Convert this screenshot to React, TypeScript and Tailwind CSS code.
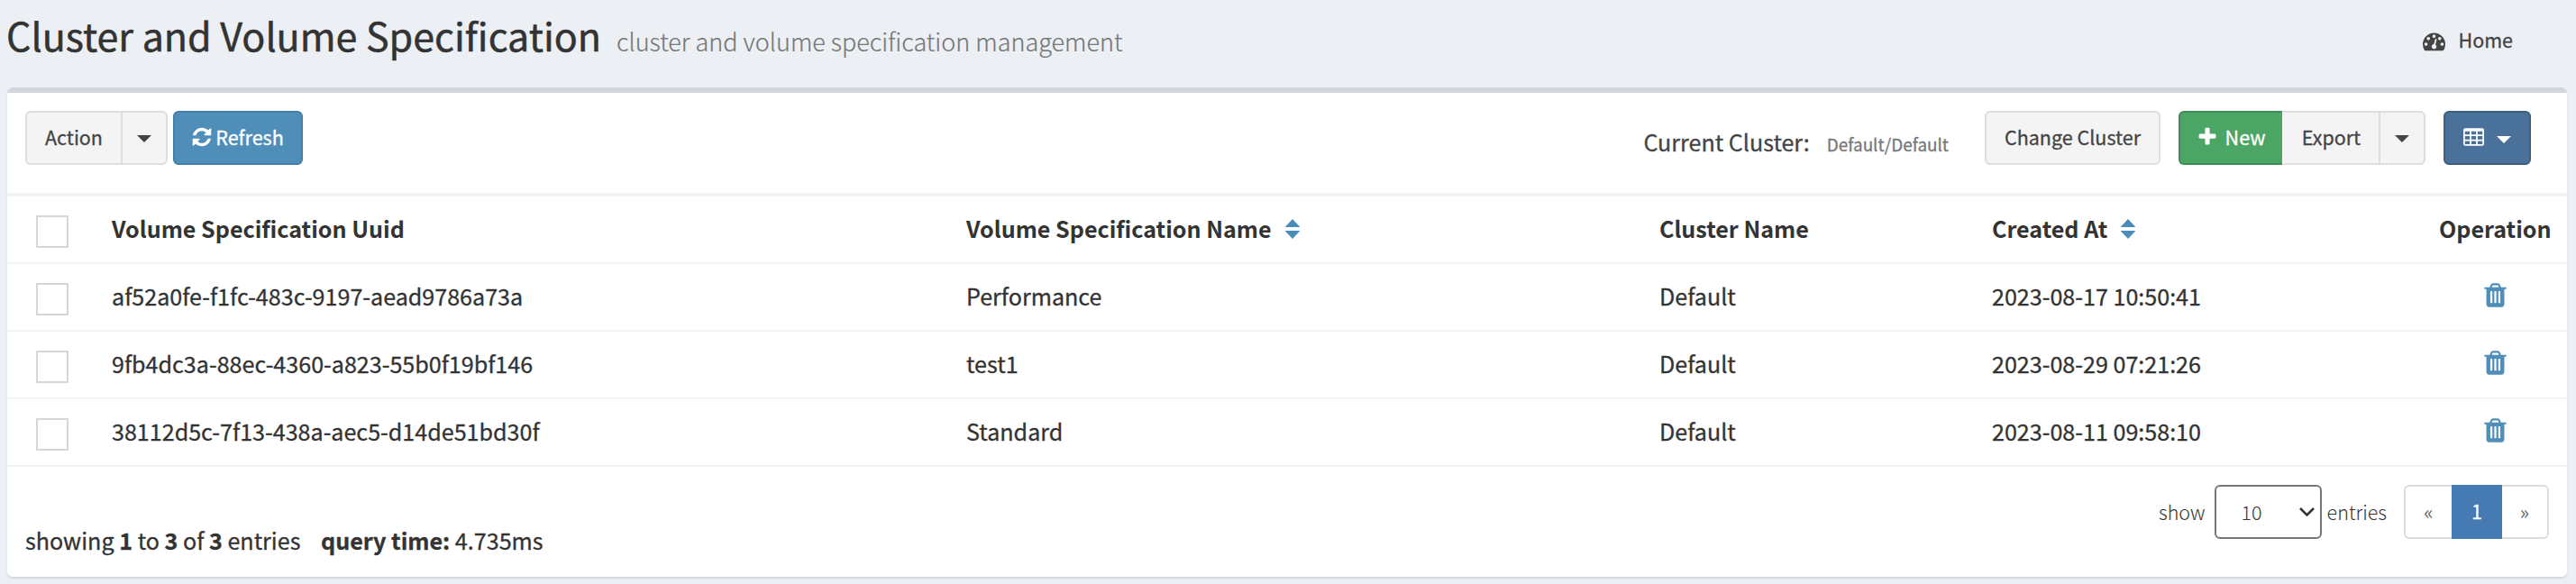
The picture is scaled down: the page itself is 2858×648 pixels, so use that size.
import type { ReactNode } from "react";

type Row = { uuid: string; name: string; cluster: string; created: string };

const rows: Row[] = [
  { uuid: "af52a0fe-f1fc-483c-9197-aead9786a73a", name: "Performance", cluster: "Default", created: "2023-08-17 10:50:41" },
  { uuid: "9fb4dc3a-88ec-4360-a823-55b0f19bf146", name: "test1", cluster: "Default", created: "2023-08-29 07:21:26" },
  { uuid: "38112d5c-7f13-438a-aec5-d14de51bd30f", name: "Standard", cluster: "Default", created: "2023-08-11 09:58:10" },
];

const columns = "grid grid-cols-[116px_948px_769px_369px_496px_124px] h-[75px] border-b-2 border-[#f4f4f4]";
const grayButton = "flex items-center justify-center h-[60px] pb-[3px] border-2 border-[#ddd] bg-[#f4f4f4] text-[#444]";

function Glyph({ d, className }: { d: string; className: string }) {
  return (
    <svg viewBox="0 0 1792 1792" fill="currentColor" fillRule="evenodd" className={className}>
      <path d={d} />
    </svg>
  );
}

const refreshPath =
  "M1639 1056q0 5-1 7-64 268-268 434.500t-478 166.500q-146 0-282.500-55t-243.500-157l-129 129q-19 19-45 19t-45-19-19-45v-448q0-26 19-45t45-19h448q26 0 45 19t19 45-19 45l-137 137q71 66 161 102t187 36q134 0 250-65t186-179q11-17 53-117 8-23 30-23h192q13 0 22.500 9.500t9.500 22.500zm25-800v448q0 26-19 45t-45 19h-448q-26 0-45-19t-19-45 19-45l138-138q-148-137-349-137-134 0-250 65t-186 179q-11 17-53 117-8 23-30 23h-199q-13 0-22.500-9.500t-9.500-22.500v-7q65-268 270-434.500t480-166.500q146 0 284 55.500t245 156.500l130-129q19-19 45-19t45 19 19 45z";
const plusPath =
  "M1600 736v192q0 40-28 68t-68 28h-416v416q0 40-28 68t-68 28h-192q-40 0-68-28t-28-68v-416h-416q-40 0-68-28t-28-68v-192q0-40 28-68t68-28h416v-416q0-40 28-68t68-28h192q40 0 68 28t28 68v416h416q40 0 68 28t28 68z";
const gaugePath =
  "M384 1152q0-53-37.500-90.500t-90.500-37.500-90.500 37.500-37.500 90.500 37.500 90.500 90.500 37.500 90.500-37.500 37.500-90.500zm192-448q0-53-37.500-90.500t-90.500-37.500-90.500 37.500-37.500 90.500 37.500 90.500 90.500 37.500 90.500-37.500 37.500-90.500zm428 481l101-382q6-26-7.500-48.500t-38.500-29.500-48 6.500-30 39.500l-101 382q-60 5-107 43.500t-63 98.500q-20 77 20 146t117 89 146-20 89-117q16-60-6-117t-72-91zm660-33q0-53-37.500-90.500t-90.500-37.500-90.500 37.500-37.500 90.500 37.500 90.500 90.500 37.500 90.500-37.500 37.500-90.500zm-640-640q0-53-37.500-90.500t-90.500-37.500-90.500 37.500-37.500 90.500 37.500 90.500 90.500 37.500 90.500-37.500 37.500-90.500zm448 192q0-53-37.500-90.500t-90.500-37.500-90.500 37.500-37.500 90.500 37.500 90.500 90.500 37.500 90.500-37.500 37.500-90.500zm320 448q0 261-141 483-19 29-54 29h-1402q-35 0-54-29-141-221-141-483 0-182 71-348t191-286 286-191 348-71 348 71 286 191 191 286 71 348z";
const trashPath =
  "M704 1376v-704q0-14-9-23t-23-9h-64q-14 0-23 9t-9 23v704q0 14 9 23t23 9h64q14 0 23-9t9-23zm256 0v-704q0-14-9-23t-23-9h-64q-14 0-23 9t-9 23v704q0 14 9 23t23 9h64q14 0 23-9t9-23zm256 0v-704q0-14-9-23t-23-9h-64q-14 0-23 9t-9 23v704q0 14 9 23t23 9h64q14 0 23-9t9-23zm-544-992h448l-48-117q-7-9-17-11h-317q-10 2-17 11zm928 32v64q0 14-9 23t-23 9h-96v948q0 83-47 143.500t-113 60.500h-832q-66 0-113-58.500t-47-141.500v-952h-96q-14 0-23-9t-9-23v-64q0-14 9-23t23-9h309l70-167q15-37 54-63t79-26h320q40 0 79 26t54 63l70 167h309q14 0 23 9t9 23z";

function TableIcon() {
  return (
    <svg viewBox="0 0 1664 1408" fill="currentColor" fillRule="evenodd" className="h-[20px] w-[23px]">
      <path d="M160 0H1504A160 160 0 0 1 1664 160V1248A160 160 0 0 1 1504 1408H160A160 160 0 0 1 0 1248V160A160 160 0 0 1 160 0ZM128 256V512H512V256ZM640 256V512H1024V256ZM1152 256V512H1536V256ZM128 640V896H512V640ZM640 640V896H1024V640ZM1152 640V896H1536V640ZM128 1024V1280H512V1024ZM640 1024V1280H1024V1024ZM1152 1024V1280H1536V1024Z" />
    </svg>
  );
}

function Caret() {
  return (
    <svg viewBox="0 0 16 8" fill="currentColor" className="h-[8px] w-[16px]">
      <path d="M0 0H16L8 8Z" />
    </svg>
  );
}

function SortIcon() {
  return (
    <svg viewBox="0 0 16 22" fill="currentColor" className="ml-[15px] h-[22px] w-[16px] text-[#4a8dbb]">
      <path d="M8 0L16 8.500V9H0V8.500ZM0 13H16V13.500L8 22L0 13.500Z" />
    </svg>
  );
}

function Checkbox() {
  return (
    <div className="flex items-center pt-[5px] pl-8">
      <span className="size-9 border-2 border-[#d7d7d7] bg-white" />
    </div>
  );
}

function Cell({ children }: { children: ReactNode }) {
  return <div className="flex items-center pb-px">{children}</div>;
}

export default function App() {
  return (
    <div className="flex h-[648px] w-[2858px] flex-col overflow-hidden bg-[#ecf0f5] font-['Noto_Sans_CJK_SC',sans-serif] text-[25.100px] leading-none whitespace-nowrap text-[#333] [-webkit-text-stroke:0.3px]">
      <header className="flex h-[97px] justify-between pr-[70px] pl-[7px]">
        <h1 className="flex h-[84px] items-center text-[43px] leading-[60px] [-webkit-text-stroke:0.5px]">
          <span>
            Cluster and Volume Specification
            <small className="ml-[17px] text-[27px] font-light text-[#777] [-webkit-text-stroke:0.2px]">cluster and volume specification management</small>
          </span>
        </h1>
        <nav className="flex h-[87px] items-center text-[21.500px] text-[#444]">
          <Glyph d={gaugePath} className="mt-[3px] mr-[14px] size-[25px]" />
          Home
        </nav>
      </header>

      <main className="mr-[10px] ml-2 h-[543px] rounded-[6px] border-t-[6px] border-[#d2d6de] bg-white shadow-[0_2px_2px_rgba(0,0,0,0.1)]">
        <div className="flex h-[111px] items-start justify-between pt-5 pr-10 pl-5 text-[21.500px]">
          <div className="flex">
            <button className={`${grayButton} w-[108px] rounded-l-[6px]`}>Action</button>
            <button className={`${grayButton} -ml-[2px] w-[52px] rounded-r-[6px]`}>
              <span className="pt-[4px]"><Caret /></span>
            </button>
            <button className="ml-[6px] flex h-[60px] w-[144px] items-center justify-center rounded-[6px] border-2 border-[#437fa8] bg-[#508eba] pr-px pb-[3px] text-white">
              <Glyph d={refreshPath} className="mt-px mr-[3px] size-[24px]" />
              Refresh
            </button>
          </div>
          <div className="flex">
            <div className="flex h-[70px] items-center text-[25.100px] text-[#444]">
              <span className="pb-px">
                Current Cluster:
                <small className="ml-[19px] text-[18.900px] text-[#777]">Default/Default</small>
              </span>
            </div>
            <button className={`${grayButton} ml-[40px] w-[195px] rounded-[6px]`}>Change Cluster</button>
            <button className="ml-5 flex h-[60px] w-[115px] items-center justify-center rounded-l-[6px] border-2 border-r-0 border-[#408c56] bg-[#4ba564] pr-px pb-[3px] text-white">
              <Glyph d={plusPath} className="mr-[8px] size-[24px]" />
              New
            </button>
            <button className={`${grayButton} w-[109px] border-l-[#f4f4f4]`}>Export</button>
            <button className={`${grayButton} -ml-[2px] w-[52px] rounded-r-[6px]`}>
              <span className="pt-[4px]"><Caret /></span>
            </button>
            <button className="ml-5 flex h-[60px] w-[97px] items-center justify-center gap-[14px] rounded-[6px] border-2 border-[#3f5d7d] bg-[#4a7199] pb-[3px] text-white">
              <TableIcon />
              <span className="pt-[6px]"><Caret /></span>
            </button>
          </div>
        </div>

        <div className="border-t-4 border-[#f4f4f4]">
          <div className={`${columns} font-bold [-webkit-text-stroke:0px]`}>
            <Checkbox />
            <Cell>Volume Specification Uuid</Cell>
            <Cell>Volume Specification Name<SortIcon /></Cell>
            <Cell>Cluster Name</Cell>
            <Cell>Created At<SortIcon /></Cell>
            <Cell>Operation</Cell>
          </div>
          {rows.map((row) => (
            <div key={row.uuid} className={columns}>
              <Checkbox />
              <Cell>{row.uuid}</Cell>
              <Cell>{row.name}</Cell>
              <Cell>{row.cluster}</Cell>
              <Cell>{row.created}</Cell>
              <div className="flex items-center justify-center pb-[4px] text-[#508eba]">
                <Glyph d={trashPath} className="size-[31px]" />
              </div>
            </div>
          ))}
        </div>

        <footer className="flex justify-between pr-5 pl-5">
          <p className="pt-[69px]">
            showing <b>1</b> to <b>3</b> of <b>3</b> entries <b className="ml-[17px]">query time:</b> 4.735ms
          </p>
          <div className="mt-5 flex h-[60px] items-center text-[21.500px] [-webkit-text-stroke:0px]">
            <span className="pb-px font-light">show</span>
            <div className="ml-[10px] flex h-[60px] w-[119px] items-center justify-between rounded-[6px] border-2 border-[#767676] bg-white pr-[6px] pb-px pl-[28px] font-light">
              10
              <svg viewBox="0 0 17 10" fill="none" stroke="#333" strokeWidth="2.500" className="h-[10px] w-[17px]">
                <path d="M1 1L8.500 8.500L16 1" />
              </svg>
            </div>
            <span className="ml-[6px] pb-px font-light">entries</span>
            <div className="ml-[19px] flex text-[#666]">
              <span className="flex h-[60px] w-[53px] items-center justify-center rounded-l-[6px] border-2 border-r-0 border-[#ddd] pb-px">«</span>
              <span className="flex h-[60px] w-[56px] items-center justify-center bg-[#457ab3] pb-[3px] text-white [-webkit-text-stroke:0.3px]">1</span>
              <span className="flex h-[60px] w-[52px] items-center justify-center rounded-r-[6px] border-2 border-l-0 border-[#ddd] pb-px">»</span>
            </div>
          </div>
        </footer>
      </main>
    </div>
  );
}
